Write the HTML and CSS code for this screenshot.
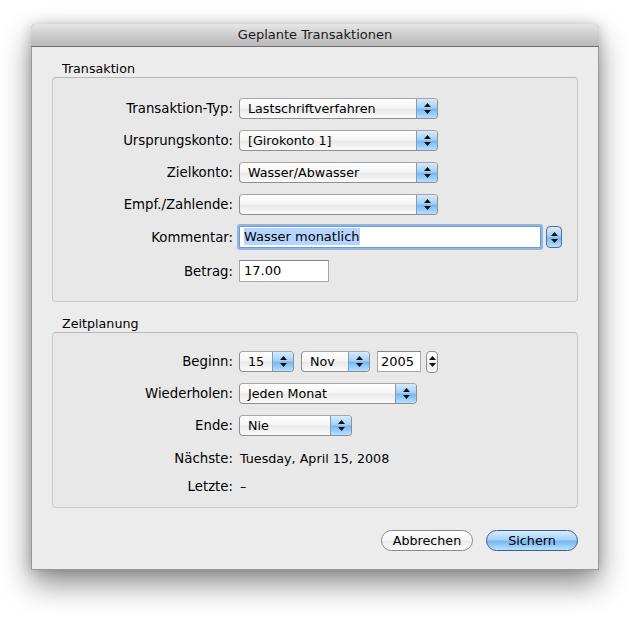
FILE: index.html
```html
<!DOCTYPE html>
<html lang="de">
<head>
    <meta charset="UTF-8">
    <title>Geplante Transaktionen</title>
    <link rel="stylesheet" href="styles.css">
</head>
<body>

    <div class="window">
        <div class="titlebar">Geplante Transaktionen</div>

        <div class="content">
            <div class="group-title">Transaktion</div>
            <div class="group group-trans">
                <div class="row">
                    <label>Transaktion-Typ:</label>
                    <div class="popup w199"><span class="val">Lastschriftverfahren</span><span class="arrows"><svg width="7" height="11" viewBox="0 0 7 11"><path d="M3.5 0 L7 4 L0 4 Z M0 7 L7 7 L3.5 11 Z" fill="#111"/></svg></span></div>
                </div>
                <div class="row">
                    <label>Ursprungskonto:</label>
                    <div class="popup w199"><span class="val">[Girokonto 1]</span><span class="arrows"><svg width="7" height="11" viewBox="0 0 7 11"><path d="M3.5 0 L7 4 L0 4 Z M0 7 L7 7 L3.5 11 Z" fill="#111"/></svg></span></div>
                </div>
                <div class="row">
                    <label>Zielkonto:</label>
                    <div class="popup w199"><span class="val">Wasser/Abwasser</span><span class="arrows"><svg width="7" height="11" viewBox="0 0 7 11"><path d="M3.5 0 L7 4 L0 4 Z M0 7 L7 7 L3.5 11 Z" fill="#111"/></svg></span></div>
                </div>
                <div class="row">
                    <label>Empf./Zahlende:</label>
                    <div class="popup w199"><span class="val"></span><span class="arrows"><svg width="7" height="11" viewBox="0 0 7 11"><path d="M3.5 0 L7 4 L0 4 Z M0 7 L7 7 L3.5 11 Z" fill="#111"/></svg></span></div>
                </div>
                <div class="row row-field">
                    <label>Kommentar:</label>
                    <div class="field focus w302"><span class="sel">Wasser monatlich</span></div>
                    <div class="stepper blue"><svg width="7" height="11" viewBox="0 0 7 11"><path d="M3.5 0 L7 4 L0 4 Z M0 7 L7 7 L3.5 11 Z" fill="#111"/></svg></div>
                </div>
                <div class="row row-field">
                    <label>Betrag:</label>
                    <div class="field w90">17.00</div>
                </div>
            </div>

            <div class="group-title">Zeitplanung</div>
            <div class="group group-plan">
                <div class="row">
                    <label>Beginn:</label>
                    <div class="popup w55"><span class="val">15</span><span class="arrows"><svg width="7" height="11" viewBox="0 0 7 11"><path d="M3.5 0 L7 4 L0 4 Z M0 7 L7 7 L3.5 11 Z" fill="#111"/></svg></span></div>
                    <div class="popup w69"><span class="val">Nov</span><span class="arrows"><svg width="7" height="11" viewBox="0 0 7 11"><path d="M3.5 0 L7 4 L0 4 Z M0 7 L7 7 L3.5 11 Z" fill="#111"/></svg></span></div>
                    <div class="field year">2005</div>
                    <div class="stepper small"><svg width="7" height="11" viewBox="0 0 7 11"><path d="M3.5 0 L7 4 L0 4 Z M0 7 L7 7 L3.5 11 Z" fill="#111"/></svg></div>
                </div>
                <div class="row">
                    <label>Wiederholen:</label>
                    <div class="popup w178"><span class="val">Jeden Monat</span><span class="arrows"><svg width="7" height="11" viewBox="0 0 7 11"><path d="M3.5 0 L7 4 L0 4 Z M0 7 L7 7 L3.5 11 Z" fill="#111"/></svg></span></div>
                </div>
                <div class="row">
                    <label>Ende:</label>
                    <div class="popup w113"><span class="val">Nie</span><span class="arrows"><svg width="7" height="11" viewBox="0 0 7 11"><path d="M3.5 0 L7 4 L0 4 Z M0 7 L7 7 L3.5 11 Z" fill="#111"/></svg></span></div>
                </div>
                <div class="row row-text">
                    <label>Nächste:</label>
                    <span class="info">Tuesday, April 15, 2008</span>
                </div>
                <div class="row row-text">
                    <label>Letzte:</label>
                    <span class="info">–</span>
                </div>
            </div>

            <div class="buttons">
                <button class="btn">Abbrechen</button>
                <button class="btn default">Sichern</button>
            </div>
        </div>
    </div>

</body>
</html>
```

FILE: styles.css
```css
html, body {
    height: 100%;
}
body {
    margin: 0;
    min-height: 630px;
    background: #fff;
    font-family: "DejaVu Sans", "Liberation Sans", sans-serif;
    font-size: 12.7px;
    color: #000;
    overflow: hidden;
}
.window {
    width: 568px;
    height: 546px;
    margin: 24px 0 0 31px;
    background: #ececec;
    box-sizing: border-box;
    border: 1px solid #9a9a9a;
    border-top: none;
    box-shadow: 0 14px 30px rgba(0, 0, 0, 0.45), 0 0 12px rgba(0, 0, 0, 0.18);
    border-radius: 5px 5px 0 0;
}
.titlebar {
    height: 22px;
    line-height: 22px;
    text-align: center;
    font-size: 13px;
    color: #1a1a1a;
    background: linear-gradient(#e6e6e6, #c9c9c9 60%, #b9b9b9);
    border-bottom: 1px solid #6f6f6f;
    border-radius: 5px 5px 0 0;
    margin: 0 -1px;
}
.content {
    padding: 14px 20px 0 20px;
}
.group-title {
    padding-left: 10px;
    height: 16px;
    line-height: 16px;
}
.group {
    background: #e8e8e8;
    border: 1px solid #c8c8c8;
    border-top-color: #b8b8b8;
    border-radius: 4px;
    box-sizing: border-box;
}
.group-trans {
    height: 225px;
    padding-top: 20px;
    margin-bottom: 14px;
}
.group-plan {
    height: 176px;
    padding-top: 18px;
}
.row {
    display: flex;
    align-items: center;
    height: 21px;
    margin-bottom: 11px;
}
.row-field {
    height: 22px;
    margin-bottom: 12px;
}
.row-text {
    height: 22px;
    margin-bottom: 6px;
}
.row label {
    width: 180px;
    text-align: right;
    padding-right: 6px;
    flex-shrink: 0;
    font-size: 13.3px;
}
.popup {
    display: flex;
    height: 21px;
    box-sizing: border-box;
    border: 1px solid #8f8f8f;
    border-top-color: #a5a5a5;
    border-radius: 4px;
    background: linear-gradient(#ffffff, #f6f6f6 45%, #e9e9e9 55%, #fbfbfb);
    margin-right: 7px;
    overflow: hidden;
}
.popup .val {
    flex: 1;
    padding-left: 8px;
    line-height: 19px;
    white-space: nowrap;
}
.popup .arrows, .stepper.blue {
    display: flex;
    align-items: center;
    justify-content: center;
    background: linear-gradient(#d4ebfd, #a6d0f6 45%, #7ab8f0 55%, #b5e0fd);
}
.popup .arrows {
    width: 20px;
    border-left: 1px solid #7d9dc0;
}
.w199 { width: 199px; }
.w178 { width: 178px; }
.w113 { width: 113px; }
.w69 { width: 69px; }
.w55 { width: 55px; }
.field {
    height: 22px;
    box-sizing: border-box;
    background: #fff;
    border: 1px solid #a8a8a8;
    border-top-color: #858585;
    padding-left: 4px;
    line-height: 20px;
    font-size: 13px;
}
.w302 { width: 302px; }
.w90 { width: 90px; }
.field.focus {
    border: 1px solid #6f9bc9;
    box-shadow: 0 0 0 2px #8fb6e4;
    border-radius: 1px;
}
.sel {
    background: #b5d5ff;
    padding: 1px 0;
}
.stepper.blue {
    width: 16px;
    height: 22px;
    box-sizing: border-box;
    margin-left: 5px;
    border: 1px solid #4f6f99;
    border-radius: 4px;
}
.field.year {
    width: 44px;
    height: 21px;
    line-height: 19px;
    padding-left: 3px;
}
.stepper.small {
    display: flex;
    align-items: center;
    justify-content: center;
    width: 12px;
    height: 22px;
    box-sizing: border-box;
    margin-left: 5px;
    border: 1px solid #8f8f8f;
    border-radius: 4px;
    background: linear-gradient(#ffffff, #f2f2f2 50%, #e6e6e6 50%, #fafafa);
}
.info {
    padding-left: 1px;
}
.buttons {
    display: flex;
    justify-content: flex-end;
    gap: 13px;
    margin-top: 22px;
}
.btn {
    width: 92px;
    height: 21px;
    border-radius: 11px;
    border: 1px solid #8a8a8a;
    background: linear-gradient(#ffffff, #f4f4f4 50%, #e8e8e8 50%, #fdfdfd);
    font-family: "DejaVu Sans", "Liberation Sans", sans-serif;
    font-size: 12.7px;
    color: #000;
    padding: 0;
}
.btn.default {
    border-color: #3e5c9b;
    background: linear-gradient(#d7ecfd, #a7d2f8 45%, #76b6f1 55%, #b9e3fd);
}
```
